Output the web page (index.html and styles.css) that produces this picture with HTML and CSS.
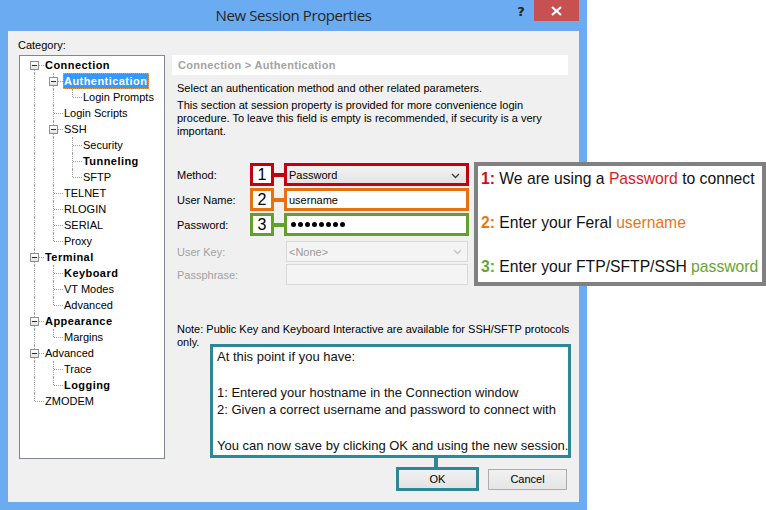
FILE: index.html
```html
<!DOCTYPE html>
<html>
<head>
<meta charset="utf-8">
<title>New Session Properties</title>
<link rel="stylesheet" href="styles.css">
</head>
<body>
<div class="screen">
  <div class="window">
    <div class="titlebar">
      <div class="tb-side"></div>
      <div class="title">New Session Properties</div>
      <div class="tb-controls">
        <div class="help">?</div>
        <div class="close">
          <svg width="11" height="10" viewBox="0 0 11 10"><path d="M1 1 L10 9 M10 1 L1 9" stroke="#fff" stroke-width="2.2" fill="none"/></svg>
        </div>
      </div>
    </div>
    <div class="client">
      <div class="main">
        <div class="catcol">
          <div class="catlabel">Category:</div>
          <div class="tree">
            <div class="row"><span class="node first"><i class="box"></i></span><span class="lbl b">Connection</span></div>
            <div class="row"><span class="g on"></span><span class="node mid"><i class="box"></i></span><span class="lbl b sel">Authentication</span></div>
            <div class="row"><span class="g on"></span><span class="g on"></span><span class="node last"></span><span class="lbl">Login Prompts</span></div>
            <div class="row"><span class="g on"></span><span class="node mid"></span><span class="lbl">Login Scripts</span></div>
            <div class="row"><span class="g on"></span><span class="node mid"><i class="box"></i></span><span class="lbl">SSH</span></div>
            <div class="row"><span class="g on"></span><span class="g on"></span><span class="node mid"></span><span class="lbl">Security</span></div>
            <div class="row"><span class="g on"></span><span class="g on"></span><span class="node mid"></span><span class="lbl b">Tunneling</span></div>
            <div class="row"><span class="g on"></span><span class="g on"></span><span class="node last"></span><span class="lbl">SFTP</span></div>
            <div class="row"><span class="g on"></span><span class="node mid"></span><span class="lbl">TELNET</span></div>
            <div class="row"><span class="g on"></span><span class="node mid"></span><span class="lbl">RLOGIN</span></div>
            <div class="row"><span class="g on"></span><span class="node mid"></span><span class="lbl">SERIAL</span></div>
            <div class="row"><span class="g on"></span><span class="node last"></span><span class="lbl">Proxy</span></div>
            <div class="row"><span class="node mid"><i class="box"></i></span><span class="lbl b">Terminal</span></div>
            <div class="row"><span class="g on"></span><span class="node mid"></span><span class="lbl b">Keyboard</span></div>
            <div class="row"><span class="g on"></span><span class="node mid"></span><span class="lbl">VT Modes</span></div>
            <div class="row"><span class="g on"></span><span class="node last"></span><span class="lbl">Advanced</span></div>
            <div class="row"><span class="node mid"><i class="box"></i></span><span class="lbl b">Appearance</span></div>
            <div class="row"><span class="g on"></span><span class="node last"></span><span class="lbl">Margins</span></div>
            <div class="row"><span class="node mid"><i class="box"></i></span><span class="lbl">Advanced</span></div>
            <div class="row"><span class="g on"></span><span class="node mid"></span><span class="lbl">Trace</span></div>
            <div class="row"><span class="g on"></span><span class="node last"></span><span class="lbl b">Logging</span></div>
            <div class="row"><span class="node last"></span><span class="lbl">ZMODEM</span></div>
          </div>
        </div>
        <div class="panel">
          <div class="crumb">Connection &gt; Authentication</div>
          <p class="desc">Select an authentication method and other related parameters.</p>
          <p class="desc2">This section at session property is provided for more convenience login<br>procedure. To leave this field is empty is recommended, if security is a very<br>important.</p>
          <div class="form">
            <div class="frow">
              <span class="flabel">Method:</span>
              <span class="num red">1</span><span class="conn red-bg"></span>
              <span class="field red select"><span class="ftext">Password</span>
                <svg class="chev" width="9" height="6" viewBox="0 0 9 6"><path d="M1 1 L4.5 4.5 L8 1" stroke="#404040" stroke-width="1.4" fill="none"/></svg>
              </span>
            </div>
            <div class="frow">
              <span class="flabel">User Name:</span>
              <span class="num orange">2</span><span class="conn orange-bg"></span>
              <span class="field orange"><span class="ftext">username</span></span>
            </div>
            <div class="frow">
              <span class="flabel">Password:</span>
              <span class="num green">3</span><span class="conn green-bg"></span>
              <span class="field green"><span class="dots"><i></i><i></i><i></i><i></i><i></i><i></i><i></i><i></i></span></span>
            </div>
            <div class="frow dis first-dis">
              <span class="flabel">User Key:</span>
              <span class="dfield"><span class="ftext">&lt;None&gt;</span>
                <svg class="chev" width="9" height="6" viewBox="0 0 9 6"><path d="M1 1 L4.5 4.5 L8 1" stroke="#c4c4c4" stroke-width="1.4" fill="none"/></svg>
              </span>
            </div>
            <div class="frow dis">
              <span class="flabel">Passphrase:</span>
              <span class="dfield"></span>
            </div>
          </div>
          <p class="note">Note: Public Key and Keyboard Interactive are available for SSH/SFTP protocols<br>only.</p>
        </div>
      </div>
      <div class="buttons">
        <div class="btn ok">OK</div>
        <div class="btn cancel">Cancel</div>
      </div>
    </div>
  </div>

  <div class="callout-right">
    <div class="cl"><b class="c-red">1:</b> We are using a <span class="c-red2">Password</span> to connect</div>
    <div class="cl"><b class="c-orange">2:</b> Enter your Feral <span class="c-orange">username</span></div>
    <div class="cl"><b class="c-green">3:</b> Enter your FTP/SFTP/SSH <span class="c-green">password</span></div>
  </div>

  <div class="callout-bottom">
    <div class="bl">At this point if you have:</div>
    <div class="bl">&nbsp;</div>
    <div class="bl">1: Entered your hostname in the Connection window</div>
    <div class="bl">2: Given a correct username and password to connect with</div>
    <div class="bl">&nbsp;</div>
    <div class="bl">You can now save by clicking OK and using the new session.</div>
  </div>
  <div class="ok-link"></div>
</div>
</body>
</html>
```

FILE: styles.css
```css
html, body {
  margin: 0;
  padding: 0;
  background: #ffffff;
}

.screen {
  position: relative;
  width: 766px;
  height: 510px;
  overflow: hidden;
  font-family: "Liberation Sans", Arial, sans-serif;
  font-size: 11px;
  color: #000;
}

.window {
  width: 587px;
  height: 510px;
  box-sizing: border-box;
  background: #6aabf2;
  padding: 0 8px 8px 8px;
  display: flex;
  flex-direction: column;
}

.titlebar {
  height: 31px;
  display: grid;
  grid-template-columns: 1fr auto 1fr;
  align-items: start;
}

.title {
  font-family: "Open Sans", "Noto Sans", sans-serif;
  font-size: 15px;
  color: #262626;
  line-height: 31px;
  letter-spacing: -0.4px;
}

.tb-controls {
  justify-self: end;
  display: flex;
  align-items: flex-start;
}

.help {
  width: 26px;
  height: 22px;
  line-height: 24px;
  text-align: center;
  font-family: "DejaVu Sans", sans-serif;
  font-weight: bold;
  font-size: 13px;
  color: #222;
}

.close {
  width: 45px;
  height: 21px;
  background: #c75050;
  display: flex;
  align-items: center;
  justify-content: center;
}

.client {
  flex: 1;
  background: #f0f0f0;
  padding: 7px 11px 0 11px;
  display: flex;
  flex-direction: column;
}

.main {
  display: flex;
  gap: 7px;
}

.catcol {
  width: 146px;
  display: flex;
  flex-direction: column;
}

.catlabel {
  line-height: 14px;
  height: 17px;
  margin-left: -1px;
}

.tree {
  height: 404px;
  box-sizing: border-box;
  border: 1px solid #828790;
  background: #fff;
  padding: 1px 0 0 5px;
}

.row {
  display: flex;
  height: 16px;
  align-items: stretch;
}

.g, .node {
  position: relative;
  width: 19px;
  flex: none;
}

.g.on::before,
.node::before {
  content: "";
  position: absolute;
  left: 9px;
  top: 0;
  bottom: 0;
  border-left: 1px dotted #a0a0a0;
}

.node.first::before { top: 8px; }
.node.last::before { bottom: 8px; }

.node::after {
  content: "";
  position: absolute;
  left: 10px;
  top: 8px;
  width: 9px;
  border-top: 1px dotted #a0a0a0;
}

.box {
  position: absolute;
  left: 5px;
  top: 4px;
  width: 7px;
  height: 7px;
  border: 1px solid #8e8f8f;
  background: linear-gradient(#ffffff, #e4e4e4);
  z-index: 1;
}

.box::after {
  content: "";
  position: absolute;
  left: 1px;
  top: 3px;
  width: 5px;
  height: 1px;
  background: #2a2a2a;
}

.lbl {
  line-height: 16px;
  padding: 0 1px;
  white-space: nowrap;
}

.lbl.b {
  font-weight: bold;
  letter-spacing: 0.45px;
}

.lbl.sel {
  background: #3399ff;
  color: #fff;
  outline: 1px dotted #e8a040;
  outline-offset: -1px;
  padding: 0 2px 0 1px;
}

.panel {
  width: 396px;
  padding-top: 17px;
}

.crumb {
  height: 20px;
  line-height: 20px;
  background: #fff;
  color: #a3a3a3;
  font-weight: bold;
  letter-spacing: 0.3px;
  padding-left: 6px;
}

.desc {
  margin: 7px 0 0 5px;
  line-height: 13px;
}

.desc2 {
  margin: 4px 0 0 5px;
  line-height: 13px;
  white-space: nowrap;
}

.form {
  margin: 25px 0 0 5px;
  display: flex;
  flex-direction: column;
  gap: 2px;
}

.frow {
  display: flex;
  align-items: center;
  height: 23px;
}

.flabel {
  width: 73px;
  flex: none;
}

.num {
  width: 24px;
  height: 23px;
  box-sizing: border-box;
  border: 3px solid;
  background: #fff;
  font-size: 16px;
  line-height: 17px;
  text-align: center;
  color: #000;
}

.conn {
  width: 10px;
  height: 4px;
}

.field {
  width: 185px;
  height: 23px;
  box-sizing: border-box;
  border: 3px solid;
  background: #fff;
  display: flex;
  align-items: center;
  position: relative;
}

.field.select {
  background: linear-gradient(#f3f3f3, #e3e3e3);
}

.ftext {
  padding-left: 2px;
}

.chev {
  position: absolute;
  right: 6px;
  top: 7px;
}

.dots {
  display: flex;
  gap: 2px;
  padding-left: 4px;
}

.dots i {
  width: 5px;
  height: 5px;
  border-radius: 50%;
  background: #000;
}

.red { border-color: #c3000e; }
.red-bg { background: #c3000e; }
.orange { border-color: #e8710f; }
.orange-bg { background: #e8710f; }
.green { border-color: #63a02a; }
.green-bg { background: #63a02a; }

.frow.dis {
  height: 21px;
  color: #a2a2a2;
}

.frow.first-dis {
  margin-top: 3px;
}

.dfield {
  margin-left: 36px;
  width: 182px;
  height: 21px;
  box-sizing: border-box;
  border: 1px solid #d9d9d9;
  background: #f4f4f4;
  display: flex;
  align-items: center;
  position: relative;
  color: #9a9a9a;
}

.dfield .chev { top: 7px; right: 5px; }

.note {
  margin: 38px 0 0 5px;
  line-height: 13px;
  white-space: nowrap;
}

.buttons {
  margin-top: 8px;
  display: flex;
  justify-content: flex-end;
  align-items: center;
  gap: 9px;
  margin-right: 1px;
}

.btn {
  box-sizing: border-box;
  text-align: center;
}

.ok {
  width: 83px;
  height: 24px;
  border: 3px solid #2e8796;
  background: linear-gradient(#f1f1f1, #e3e3e3);
  line-height: 18px;
}

.cancel {
  width: 79px;
  height: 21px;
  border: 1px solid #acacac;
  background: linear-gradient(#f1f1f1, #e5e5e5);
  line-height: 19px;
}

.callout-right {
  position: absolute;
  left: 474px;
  top: 162px;
  width: 292px;
  height: 124px;
  box-sizing: border-box;
  border: 4px solid #808080;
  background: #fff;
  padding: 4px 0 0 3px;
  font-size: 15.7px;
  color: #111;
}

.cl {
  line-height: 18px;
  white-space: nowrap;
}

.cl + .cl { margin-top: 26px; }

.c-red { color: #c8101c; }
.c-red2 { color: #d41e27; }
.c-orange { color: #ea7516; }
.c-green { color: #66a52e; }

.callout-bottom {
  position: absolute;
  left: 210px;
  top: 344px;
  width: 361px;
  height: 114px;
  box-sizing: border-box;
  border: 3px solid #2e8796;
  background: #fff;
  padding: 1px 0 0 4px;
  font-size: 13px;
  color: #111;
}

.bl {
  line-height: 17.8px;
  white-space: nowrap;
}

.ok-link {
  position: absolute;
  left: 434px;
  top: 457px;
  width: 4px;
  height: 11px;
  background: #2e8796;
}
```
